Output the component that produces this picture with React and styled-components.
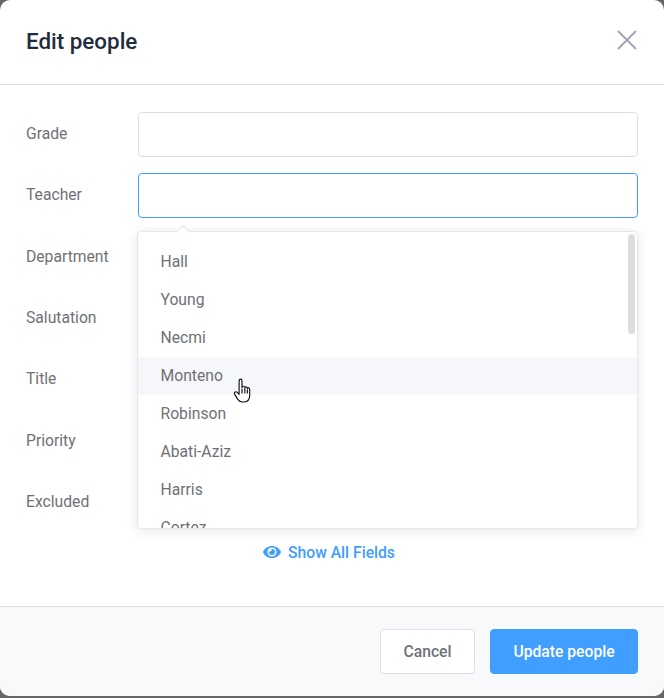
import React from 'react'
import styled, { createGlobalStyle } from 'styled-components'
import { FaEye } from 'react-icons/fa'

const fields = ['Grade', 'Teacher', 'Department', 'Salutation', 'Title', 'Priority', 'Excluded']
const teachers = ['Hall', 'Young', 'Necmi', 'Monteno', 'Robinson', 'Abati-Aziz', 'Harris', 'Cortez']

export default () => {
  return (
    <Modal>
      <GlobalStyle />
      <Header>
        <Title>Edit people</Title>
        <CloseIcon viewBox="0 0 20 20">
          <path d="M1 1 L19 19 M19 1 L1 19" />
        </CloseIcon>
      </Header>
      <Body>
        <Form>
          {fields.map((name) => (
            <Row key={name}>
              <Label>{name}</Label>
              <Input $focused={name === 'Teacher'} />
            </Row>
          ))}
          <Dropdown>
            <List>
              {teachers.map((name) => (
                <Item key={name} $hover={name === 'Monteno'}>{name}</Item>
              ))}
            </List>
            <Thumb />
          </Dropdown>
          <HandCursor viewBox="0 0 18 26">
            <path d="M6 14 V3 C6 .6 9 .6 9 3 V10 C9 8 12 8 12 10.5 C12 8.6 14.6 8.8 14.6 11 C14.8 9.6 17 10 17 12 V18 C17 22 15 25 11 25 H9.5 C7 25 5.6 23.8 4.4 22 L1.4 17 C.2 15 2.6 13.4 4 15 L6 17 Z" />
            <path d="M9 11 V16 M12 11 V16 M14.6 12 V16" />
          </HandCursor>
        </Form>
        <ShowAll>
          <FaEye />
          Show All Fields
        </ShowAll>
      </Body>
      <Footer>
        <CancelButton>Cancel</CancelButton>
        <SubmitButton>Update people</SubmitButton>
      </Footer>
    </Modal>
  )
}

const GlobalStyle = createGlobalStyle`
  html, body {
    margin: 0;
    height: 698px;
    overflow: hidden;
    background: #666;
  }
  * {
    box-sizing: border-box;
  }
`

const Modal = styled.div`
  display: flex;
  flex-direction: column;
  width: 664px;
  height: 696px;
  background: #fff;
  border-radius: 10px;
  overflow: hidden;
  font-family: Roboto, 'Liberation Sans', sans-serif;
  color: #6f7175;
`

const Header = styled.header`
  display: flex;
  align-items: center;
  justify-content: space-between;
  height: 85px;
  padding: 0 27px 4px 26px;
  border-bottom: 1px solid #dcdfe6;
`

const Title = styled.h2`
  margin: 1px 0 0;
  font-size: 22.4px;
  font-weight: 500;
  color: #1f2d3d;
`

const CloseIcon = styled.svg`
  width: 20px;
  height: 20px;
  fill: none;
  stroke: #a0a7b5;
  stroke-width: 2;
`

const Body = styled.div`
  flex: 1;
  padding: 27px 26px 0;
`

const Form = styled.div`
  position: relative;
  display: flex;
  flex-direction: column;
  gap: 16.35px;
`

const Row = styled.div`
  display: flex;
  align-items: center;
  height: 45px;
`

const Label = styled.label`
  width: 112px;
  margin-top: -2px;
  font-size: 15.7px;
  color: #6f7175;
`

const Input = styled.div`
  flex: 1;
  height: 45px;
  background: #fff;
  border: 1px solid ${(p) => (p.$focused ? '#409eff' : '#dcdfe6')};
  border-radius: 4px;
`

const Dropdown = styled.div`
  position: absolute;
  top: 119px;
  left: 111px;
  width: 501px;
  height: 298px;
  background: #fff;
  border: 1px solid #e4e7ed;
  border-radius: 4px;
  box-shadow: 0 2px 12px rgba(0, 0, 0, 0.1);

  &::before {
    content: '';
    position: absolute;
    top: -5px;
    left: 40px;
    width: 9px;
    height: 9px;
    background: #fff;
    border-top: 1px solid #e4e7ed;
    border-left: 1px solid #e4e7ed;
    transform: rotate(45deg);
  }
`

const List = styled.ul`
  position: relative;
  height: 100%;
  margin: 0;
  padding: 11px 0 0;
  list-style: none;
  overflow: hidden;
`

const Item = styled.li`
  height: 38px;
  padding: 0 22.5px;
  line-height: 38px;
  font-size: 15.7px;
  color: #6f7175;
  background: ${(p) => (p.$hover ? '#f5f7fa' : 'transparent')};
`

const Thumb = styled.div`
  position: absolute;
  top: 2px;
  right: 2px;
  width: 7px;
  height: 100px;
  border-radius: 4px;
  background: #dcddde;
`

const HandCursor = styled.svg`
  position: absolute;
  top: 266px;
  left: 207px;
  width: 18px;
  height: 25px;
  fill: #fff;
  stroke: #111;
  stroke-width: 1.2;
  stroke-linejoin: round;
`

const ShowAll = styled.div`
  display: flex;
  align-items: center;
  justify-content: center;
  gap: 7px;
  margin-top: 17.6px;
  margin-left: -6px;
  font-size: 15.7px;
  font-weight: 500;
  color: #409eff;

  svg {
    width: 18px;
    height: 16px;
  }
`

const Footer = styled.footer`
  display: flex;
  justify-content: flex-end;
  gap: 15px;
  height: 90px;
  padding: 22px 26px 0;
  background: #f8f9fb;
  border-top: 1px solid #dcdfe6;
`

const CancelButton = styled.button`
  height: 45px;
  width: 95px;
  padding: 0;
  font: 500 15.7px Roboto, sans-serif;
  color: #6f7175;
  background: #fff;
  border: 1px solid #dcdfe6;
  border-radius: 4px;
`

const SubmitButton = styled(CancelButton)`
  width: 148px;
  color: #fff;
  background: #409eff;
  border-color: #409eff;
`
